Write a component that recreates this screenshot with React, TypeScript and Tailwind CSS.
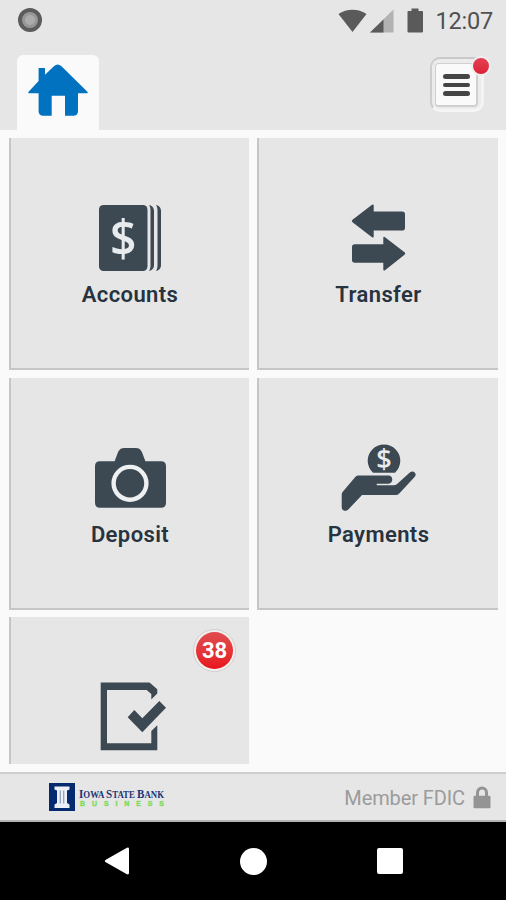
import type { ReactNode } from "react";

const INK = "#3c4953";

function AccountsIcon() {
  return (
    <svg width="80" height="70" viewBox="0 0 80 70" fill={INK} className="overflow-visible">
      <rect x="9" y="2" width="48.5" height="66" rx="4.5" />
      <path d="M59 2c3 .8 5 2.4 5 6v54c0 3.600-2 5.200-5 6 1.200-1.800 1.500-3.500 1.500-6V8c0-2.500-.3-4.200-1.500-6z" />
      <path d="M66 2c3 .8 5 2.400 5 6v54c0 3.600-2 5.200-5 6 1.200-1.800 1.500-3.500 1.500-6V8c0-2.500-.3-4.200-1.500-6z" />
      <text
        x="20"
        y="53"
        textLength="26.500"
        lengthAdjust="spacingAndGlyphs"
        className="fill-[#e8ebee] font-['Open_Sans',sans-serif] text-[51px] font-semibold"
      >
        $
      </text>
    </svg>
  );
}

function TransferIcon() {
  return (
    <svg width="80" height="70" viewBox="1 0 80 70" fill={INK}>
      <path d="M14.500 16.800 34 1.800q1.700-.9 1.700 1V8.500h28.500q2.800 0 2.800 2.800v13.400q0 2.800-2.800 2.800H35.700v5.900q0 1.800-1.700.8L14.500 19.200q-1.500-1.200 0-2.400z" />
      <path d="M66.500 49.300 47 34.200q-1.700-1-1.700.8v6.300H16.800q-2.800 0-2.800 2.800V57q0 2.800 2.800 2.800h28.500v6.600q0 1.800 1.700.8l19.500-15.500q1.500-1.200 0-2.400z" />
    </svg>
  );
}

function DepositIcon() {
  return (
    <svg width="80" height="70" viewBox="0 0 80 70" fill={INK}>
      <path d="M10 18.300h14.600l3.400-9q1.700-4.300 6.200-4.300h11.600q4.500 0 6.200 4.300l3.400 9H71q5 0 5 5v36.500q0 5-5 5H10q-5 0-5-5V23.300q0-5 5-5z" />
      <circle cx="40" cy="40.300" r="16.400" fill="none" stroke="#eef0f1" strokeWidth="4.400" />
    </svg>
  );
}

function PaymentsIcon() {
  return (
    <svg width="80" height="70" viewBox="1 0 80 70" fill={INK} className="overflow-visible">
      <path d="M35 29.800a16.300 16.300 0 1 1 22 0z" />
      <path d="M20.500 32.500H50.500c5 0 5 8.200 0 8.200H38.700v1.600H55.500q2 0 3.600-1.200l12.700-11.600c3.400-3 7.800 1 5 4.300L61.500 50.200q-1.600 1.900-4 1.900H24L10.300 66.500c-2.600 2.600-6.600 1.200-6.600-2.300V51.500q0-2 1.500-3.300L17.500 33.700q1.200-1.200 3-1.200z" />
      <text
        x="38.300"
        y="26.300"
        textLength="15.500"
        lengthAdjust="spacingAndGlyphs"
        className="fill-[#e8ebee] font-['Open_Sans',sans-serif] text-[27px] font-semibold"
      >
        $
      </text>
    </svg>
  );
}

function ApprovalsIcon() {
  return (
    <svg width="80" height="70" viewBox="0 0 80 70" fill={INK}>
      <path d="M10.700.5H59.500L67.300 7.300V11.500L61.300 17.500V12L56.700 8H17V61.300H61.300V49L67.300 43.200V68.300H10.700z" />
      <path d="M37.700 35.300 44.300 28l8 8.300L69.300 19 76 25.700 52.300 50.300z" />
    </svg>
  );
}

function HomeIcon() {
  return (
    <svg width="60" height="54" viewBox="0 0 60 54" fill="#0072bf">
      <path d="M26.200 3q3.500-3 7 0L59.400 28.800q.9 1.500-.8 1.500H50V48q0 4.700-4.700 4.700H37V32.700H23.700v20h-8.400q-4.700 0-4.700-4.700V30.300H1.400q-1.700 0-.8-1.500L10.600 18V5H17v6.700z" />
    </svg>
  );
}

function LockIcon() {
  return (
    <svg width="18" height="23" viewBox="0 0 18 23">
      <path d="M4.500 11V6.500a4.500 4.500 0 0 1 9 0V11" fill="none" stroke="#949494" strokeWidth="3" />
      <rect x=".5" y="9.700" width="17" height="12.600" rx="1.200" fill="#949494" />
    </svg>
  );
}

interface TileProps {
  label?: string;
  icon: ReactNode;
  badge?: number;
}

function Tile({ label, icon, badge }: TileProps) {
  return (
    <button
      type="button"
      className={`relative flex flex-col items-center border-l-2 border-[#c6c6c6] bg-[#e6e6e6] pt-[65px] ${
        label ? "h-[232px] border-b-2" : "h-[147px]"
      }`}
    >
      {icon}
      {label && (
        <span className="mt-2 text-[22px] leading-7 font-semibold tracking-[0.4px] text-[#27333f]">
          {label}
        </span>
      )}
      {badge !== undefined && (
        <span className="absolute top-3 right-[13px] flex size-[43px] items-center justify-center rounded-full border border-[#cfcfcf] bg-[#f3efed]">
          <span className="flex size-[37px] items-center justify-center rounded-full bg-linear-to-b from-[#df4b50] to-[#e8101a] text-[22px] font-bold text-white">
            {badge}
          </span>
        </span>
      )}
    </button>
  );
}

function StatusBar() {
  return (
    <div className="flex h-10 items-center justify-between pr-[13px] pl-[18px]">
      <span className="flex size-6 items-center justify-center rounded-full border-4 border-[#5c5c5c] bg-[#979797]">
        <span className="size-2.5 rounded-full bg-[#acacac]" />
      </span>
      <div className="flex items-center">
        <svg width="86" height="26" viewBox="0 0 86 26" fill="#5a5a5a">
          <path d="M1.500 7C9.500 1.200 21.500 1.200 29.500 7L15.500 25z" />
          <path d="M56.500 2.500v23H33z" fill="#b2b2b2" />
          <path d="M46.500 12.500v13H33z" />
          <path d="M74.500 1.500h7V4h3.500q1 0 1 1v19.500q0 1-1 1h-13.500q-1 0-1-1V5q0-1 1-1H74.500z" />
        </svg>
        <span className="mt-[3px] ml-3 text-[23.500px] leading-none tracking-[-0.2px] text-[#505050]">
          12:07
        </span>
      </div>
    </div>
  );
}

function Header() {
  return (
    <header className="h-[130px] bg-[#e6e6e6]">
      <StatusBar />
      <div className="flex h-[90px] items-end justify-between pr-[22px] pl-[17px]">
        <div className="flex h-[75px] w-[82px] justify-center rounded-t-md bg-[#fafafa] pt-2">
          <HomeIcon />
        </div>
        <button
          type="button"
          className="relative mb-[18px] flex h-[55px] w-[54px] items-center justify-center rounded-[10px] border-t-2 border-r-3 border-b-3 border-l-2 border-t-[#c9c9c9] border-r-[#f4f4f4] border-b-[#f5f5f5] border-l-[#cdcdcd] bg-[#ececec] pt-[2px]"
        >
          <span className="flex h-[44px] w-[43px] flex-col items-center justify-center gap-1 rounded-[4px] border border-r-2 border-b-2 border-[#d0d0d0] bg-[#fafafa] pt-px">
            <span className="h-[4.500px] w-[27px] rounded-full bg-[#454545]" />
            <span className="h-[4.500px] w-[27px] rounded-full bg-[#454545]" />
            <span className="h-[4.500px] w-[27px] rounded-full bg-[#454545]" />
          </span>
          <span className="absolute -top-[3px] -right-[10px] size-5 rounded-full border-2 border-[#f1eeee] bg-linear-to-b from-[#e34055] to-[#dc2036]" />
        </button>
      </div>
    </header>
  );
}

function BankLogo() {
  return (
    <div className="flex items-center gap-1">
      <svg width="26" height="28" viewBox="0 0 26 28">
        <rect width="26" height="28" fill="#062a70" />
        <path d="M5.500 3.500h15v3l-2.500 1v12.500l2.500 1.500v3.500h-15v-3.500L8 20V7.500l-2.500-1z" fill="#edf0f6" />
        <path d="M11.300 7.500v13M14.700 7.500v13" stroke="#8c9cc0" strokeWidth="1.200" />
      </svg>
      <svg width="87" height="28" viewBox="0 0 87 28" className="overflow-visible">
        <text
          x="0"
          y="15"
          textLength="85"
          lengthAdjust="spacingAndGlyphs"
          className="fill-[#1c3474] font-['Liberation_Serif',serif] text-[10px] font-bold"
        >
          <tspan className="text-[12.500px]">I</tspan>OWA <tspan className="text-[12.500px]">S</tspan>TATE{" "}
          <tspan className="text-[12.500px]">B</tspan>ANK
        </text>
        <text
          x="1"
          y="22.500"
          textLength="84"
          className="fill-[#7fdc5c] stroke-[#7fdc5c] stroke-[0.4px] font-['Liberation_Sans',sans-serif] text-[7px] font-bold"
        >
          BUSINESS
        </text>
      </svg>
    </div>
  );
}

function NavBar() {
  return (
    <nav className="flex h-[78px] items-center justify-between bg-black pr-[103px] pl-[104px] text-white">
      <svg width="26" height="28" viewBox="0 0 26 28" fill="currentColor">
        <path d="M1.800 12.700 22.500.9Q25 0 25 2v24q0 2-2.500 1.100L1.800 15.300q-2-1.300 0-2.600z" />
      </svg>
      <span className="mr-px size-[27px] rounded-full bg-white" />
      <span className="size-[26px] rounded-[2px] bg-white" />
    </nav>
  );
}

export default function App() {
  return (
    <div className="flex h-[900px] w-[506px] flex-col overflow-hidden bg-[#fafafa] font-[Roboto,sans-serif]">
      <Header />
      <main className="grid h-[642px] grid-cols-[240px_241px] content-start gap-x-2 gap-y-[7.500px] pt-2 pl-[9px]">
        <Tile label="Accounts" icon={<AccountsIcon />} />
        <Tile label="Transfer" icon={<TransferIcon />} />
        <Tile label="Deposit" icon={<DepositIcon />} />
        <Tile label="Payments" icon={<PaymentsIcon />} />
        <Tile icon={<ApprovalsIcon />} badge={38} />
      </main>
      <footer className="flex h-[50px] items-center justify-between border-t-2 border-b-2 border-t-[#cecece] border-b-[#b4b4b4] bg-[#e6e6e6] pr-[15px] pl-[49px]">
        <BankLogo />
        <div className="flex items-center gap-2 text-[20px] tracking-[-0.1px] text-[#9b9b9b]">
          <span className="pt-0.5">Member FDIC</span>
          <LockIcon />
        </div>
      </footer>
      <NavBar />
    </div>
  );
}
